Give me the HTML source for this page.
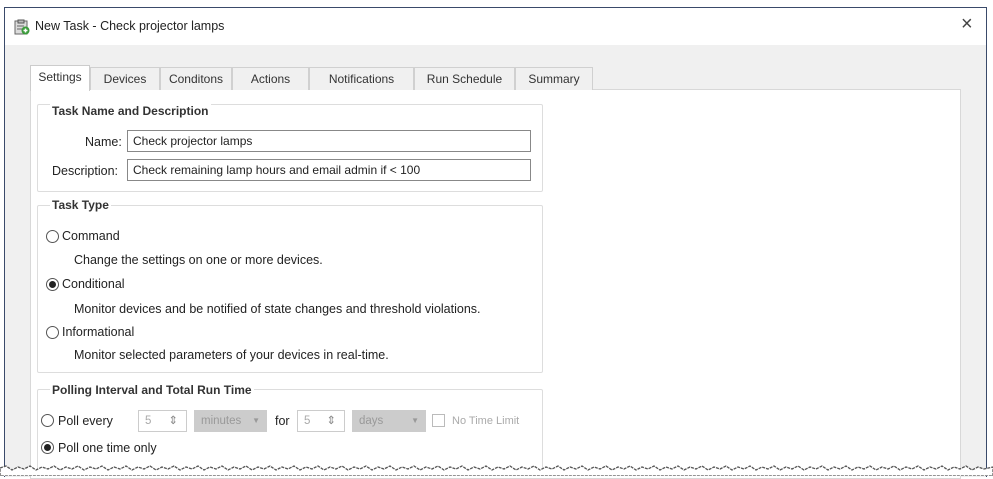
<!DOCTYPE html>
<html><head><meta charset="utf-8"><style>
*{margin:0;padding:0;box-sizing:border-box}
body{width:993px;height:476px;background:#fff;position:relative;overflow:hidden;font-family:"Liberation Sans",sans-serif;font-size:12.5px;color:#222}
.a{position:absolute;white-space:nowrap}
.tab{position:absolute;top:67px;height:23px;border:1px solid #d0d0d0;border-bottom:none;background:#f0f0f0;text-align:center;line-height:22px;font-size:12px;color:#333}
.grp{position:absolute;border:1px solid #ddd;border-radius:2px}
.gt{position:absolute;background:#fff;font-weight:bold;font-size:12px;padding:0 2px;color:#333}
.inp{position:absolute;height:22px;border:1px solid #888;background:#fff;padding-left:5px;line-height:20px;font-size:12px}
.rad{position:absolute;width:13px;height:13px;border:1px solid #555;border-radius:50%;background:#fff}
.rad.on::after{content:"";position:absolute;left:2px;top:2px;width:7px;height:7px;border-radius:50%;background:#222}
.dis{position:absolute;height:22px;border:1px solid #ccc;color:#aaa;line-height:20px;padding-left:6px;font-size:11.5px}
</style></head><body>
<div class="a" style="left:4px;top:7px;width:983px;height:470px;border:1px solid #3a4a6a;border-bottom:none;background:#f0f0f0"></div>
<div class="a" style="left:5px;top:8px;width:981px;height:37px;background:#fff"></div>
<svg class="a" style="left:14px;top:19px" width="16" height="16" viewBox="0 0 16 16"><rect x="1" y="2" width="12" height="13" fill="#dcdcdc" stroke="#666"/><rect x="4" y="1" width="6" height="3" fill="#bbb" stroke="#555"/><line x1="3" y1="7" x2="10" y2="7" stroke="#666"/><line x1="3" y1="10" x2="8" y2="10" stroke="#666"/><circle cx="11.5" cy="11.5" r="4" fill="#3a9a3a"/><path d="M9.5 11.5h4M11.5 9.5v4" stroke="#fff" stroke-width="1.5"/></svg>
<div class="a" style="left:35px;top:19px;font-size:12.5px;color:#222">New Task - Check projector lamps</div>
<div class="a" style="left:961px;top:13px;font-size:20px;color:#444">×</div>

<div class="a" style="left:30px;top:89px;width:931px;height:390px;background:#fff;border:1px solid #d8d8d8"></div>
<div class="tab" style="left:30px;top:65px;height:26px;width:60px;background:#fff;border-color:#ccc">Settings</div>
<div class="tab" style="left:90px;width:70px">Devices</div>
<div class="tab" style="left:160px;width:72px">Conditons</div>
<div class="tab" style="left:232px;width:77px">Actions</div>
<div class="tab" style="left:309px;width:105px">Notifications</div>
<div class="tab" style="left:414px;width:101px">Run Schedule</div>
<div class="tab" style="left:515px;width:78px">Summary</div>

<div class="grp" style="left:37px;top:104px;width:506px;height:88px"></div>
<div class="gt" style="left:50px;top:104px">Task Name and Description</div>
<div class="a" style="left:85px;top:135px">Name:</div>
<div class="inp" style="left:127px;top:130px;width:404px">Check projector lamps</div>
<div class="a" style="left:52px;top:164px">Description:</div>
<div class="inp" style="left:127px;top:159px;width:404px">Check remaining lamp hours and email admin if &lt; 100</div>

<div class="grp" style="left:37px;top:205px;width:506px;height:168px"></div>
<div class="gt" style="left:50px;top:198px">Task Type</div>
<div class="rad" style="left:46px;top:230px"></div><div class="a" style="left:62px;top:229px">Command</div>
<div class="a" style="left:74px;top:253px">Change the settings on one or more devices.</div>
<div class="rad on" style="left:46px;top:278px"></div><div class="a" style="left:62px;top:277px">Conditional</div>
<div class="a" style="left:74px;top:302px">Monitor devices and be notified of state changes and threshold violations.</div>
<div class="rad" style="left:46px;top:326px"></div><div class="a" style="left:62px;top:325px">Informational</div>
<div class="a" style="left:74px;top:348px">Monitor selected parameters of your devices in real-time.</div>

<div class="grp" style="left:37px;top:389px;width:506px;height:85px"></div>
<div class="gt" style="left:50px;top:383px">Polling Interval and Total Run Time</div>
<div class="rad" style="left:41px;top:414px"></div><div class="a" style="left:58px;top:414px">Poll every</div>
<div class="dis" style="left:138px;top:410px;width:49px">5<span style="position:absolute;right:8px;color:#888">⇕</span></div>
<div class="dis" style="left:194px;top:410px;width:73px;background:#ccc;border-color:#ccc;color:#999">minutes<span style="position:absolute;right:6px;font-size:8px">▼</span></div>
<div class="a" style="left:275px;top:414px">for</div>
<div class="dis" style="left:297px;top:410px;width:48px">5<span style="position:absolute;right:8px;color:#888">⇕</span></div>
<div class="dis" style="left:352px;top:410px;width:74px;background:#ccc;border-color:#ccc;color:#999">days<span style="position:absolute;right:6px;font-size:8px">▼</span></div>
<div class="a" style="left:432px;top:414px;width:13px;height:13px;border:1px solid #bbb;background:#fff"></div>
<div class="a" style="left:452px;top:415px;color:#aaa;font-size:11px">No Time Limit</div>
<div class="rad on" style="left:41px;top:441px"></div><div class="a" style="left:58px;top:441px">Poll one time only</div>

<svg class="a" style="left:0;top:464px" width="993" height="12"><path d="M0 4 L6 2 L12 6 L18 3 L24 5 L30 2 L36 6 L42 3 L48 5 L54 2 L60 6 L66 3 L72 5 L78 2 L84 6 L90 3 L96 5 L102 2 L108 6 L114 3 L120 5 L126 2 L132 6 L138 3 L144 5 L150 2 L156 6 L162 3 L168 5 L174 2 L180 6 L186 3 L192 5 L198 2 L204 6 L210 3 L216 5 L222 2 L228 6 L234 3 L240 5 L246 2 L252 6 L258 3 L264 5 L270 2 L276 6 L282 3 L288 5 L294 2 L300 6 L306 3 L312 5 L318 2 L324 6 L330 3 L336 5 L342 2 L348 6 L354 3 L360 5 L366 2 L372 6 L378 3 L384 5 L390 2 L396 6 L402 3 L408 5 L414 2 L420 6 L426 3 L432 5 L438 2 L444 6 L450 3 L456 5 L462 2 L468 6 L474 3 L480 5 L486 2 L492 6 L498 3 L504 5 L510 2 L516 6 L522 3 L528 5 L534 2 L540 6 L546 3 L552 5 L558 2 L564 6 L570 3 L576 5 L582 2 L588 6 L594 3 L600 5 L606 2 L612 6 L618 3 L624 5 L630 2 L636 6 L642 3 L648 5 L654 2 L660 6 L666 3 L672 5 L678 2 L684 6 L690 3 L696 5 L702 2 L708 6 L714 3 L720 5 L726 2 L732 6 L738 3 L744 5 L750 2 L756 6 L762 3 L768 5 L774 2 L780 6 L786 3 L792 5 L798 2 L804 6 L810 3 L816 5 L822 2 L828 6 L834 3 L840 5 L846 2 L852 6 L858 3 L864 5 L870 2 L876 6 L882 3 L888 5 L894 2 L900 6 L906 3 L912 5 L918 2 L924 6 L930 3 L936 5 L942 2 L948 6 L954 3 L960 5 L966 2 L972 6 L978 3 L984 5 L993 3 L993 12 L0 12Z" fill="#fff" stroke="#555" stroke-width="1.3" stroke-dasharray="3 1"/></svg>
</body></html>
